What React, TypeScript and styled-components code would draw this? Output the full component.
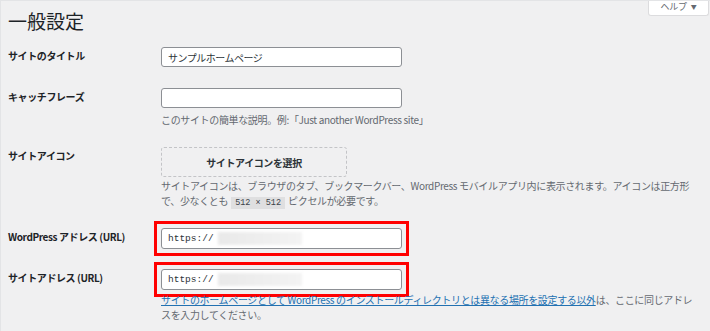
import React from "react";
import styled, { createGlobalStyle } from "styled-components";

const Global = createGlobalStyle`
  html, body { margin: 0; padding: 0; background: #f0f0f1; }
  body { font-family: "Noto Sans CJK JP", "Noto Sans", sans-serif; color: #1d2327; }
`;

const Page = styled.div`
  width: 710px;
  height: 331px;
  box-sizing: border-box;
  overflow: hidden;
  background: #f0f0f1;
  border-top: 1px solid #e3e4e6;
  border-left: 1px solid #e3e4e6;
  padding-left: 7px;
`;

const Header = styled.div`
  display: flex;
  justify-content: space-between;
  align-items: flex-start;
`;

const Heading = styled.h1`
  margin: 0;
  padding-top: 7px;
  font-size: 19px;
  line-height: 25px;
  font-weight: 400;
  color: #1d2327;
`;

const HelpTab = styled.button`
  margin-top: -1px;
  margin-right: 1px;
  width: 61px;
  height: 16px;
  padding: 0 0 1px;
  display: flex;
  align-items: center;
  justify-content: center;
  gap: 4px;
  background: #fff;
  border: 1px solid #dcdcde;
  border-top: none;
  border-radius: 0 0 3px 3px;
  font-family: "Noto Sans CJK JP", sans-serif;
  font-size: 9px;
  line-height: 14px;
  color: #646970;
  letter-spacing: -0.3px;
`;

const Caret = styled.span`
  font-size: 6px;
  color: #646970;
`;

const Table = styled.div`
  display: flex;
  flex-direction: column;
`;

const Row = styled.div<{ $pt: number }>`
  display: grid;
  grid-template-columns: 153px 1fr;
  align-items: start;
  padding-top: ${(p) => p.$pt}px;
`;

const Label = styled.div`
  font-size: 10px;
  letter-spacing: -0.4px;
  font-weight: 700;
  line-height: 18px;
  color: #1d2327;
`;

const Field = styled.div`
  display: flex;
  flex-direction: column;
  align-items: flex-start;
  max-width: 536px;
`;

const Input = styled.div<{ $h: number; $mono?: boolean }>`
  width: 241px;
  height: ${(p) => p.$h}px;
  box-sizing: border-box;
  background: #fff;
  border: 1px solid #8c8f94;
  border-radius: 3px;
  padding: 0 6px;
  display: flex;
  align-items: center;
  font-family: ${(p) =>
    p.$mono ? '"Liberation Mono", "DejaVu Sans Mono", monospace' : '"Noto Sans CJK JP", sans-serif'};
  font-size: ${(p) => (p.$mono ? "9.5px" : "10px")};
  letter-spacing: ${(p) => (p.$mono ? "0" : "-0.5px")};
  color: #2c3338;
  white-space: nowrap;
`;

const Highlight = styled.div`
  outline: 3px solid #ff0000;
  outline-offset: 4px;
`;

const Blur = styled.span`
  display: inline-block;
  width: 84px;
  height: 13px;
  margin-left: 4px;
  background: linear-gradient(90deg, #e9e9e9, #efefef 60%, #f3f3f3);
  filter: blur(1.5px);
`;

const Desc = styled.p<{ $mt: number }>`
  margin: ${(p) => p.$mt}px 0 0;
  font-size: 10px;
  letter-spacing: -0.35px;
  line-height: 15px;
  color: #646970;
`;

const Link = styled.a`
  color: #2271b1;
  text-decoration: underline;
`;

const Code = styled.code`
  font-family: "Liberation Mono", "DejaVu Sans Mono", monospace;
  font-size: 8.5px;
  line-height: 12px;
  letter-spacing: 0;
  background: rgba(0, 0, 0, 0.07);
  color: #3c434a;
  padding: 1px 4px;
  margin: 0 3px;
`;

const IconButton = styled.button`
  width: 186px;
  height: 30px;
  background: transparent;
  border: 1px dashed #c3c4c7;
  border-radius: 3px;
  font-family: "Noto Sans CJK JP", sans-serif;
  font-size: 10px;
  letter-spacing: -0.4px;
  font-weight: 700;
  color: #2c3338;
  padding: 0;
`;

export default function App() {
  return (
    <>
      <Global />
      <Page>
        <Header>
          <Heading>一般設定</Heading>
          <HelpTab>
            ヘルプ<Caret>▼</Caret>
          </HelpTab>
        </Header>
        <Table>
          <Row $pt={14}>
            <Label>サイトのタイトル</Label>
            <Field>
              <Input $h={20}>サンプルホームページ</Input>
            </Field>
          </Row>
          <Row $pt={21}>
            <Label>キャッチフレーズ</Label>
            <Field>
              <Input $h={20} />
              <Desc $mt={4}>このサイトの簡単な説明。例:「Just another WordPress site」</Desc>
            </Field>
          </Row>
          <Row $pt={20}>
            <Label>サイトアイコン</Label>
            <Field>
              <IconButton>サイトアイコンを選択</IconButton>
              <Desc $mt={1}>
                サイトアイコンは、ブラウザのタブ、ブックマークバー、WordPress モバイルアプリ内に表示されます。アイコンは正方形で、少なくとも
                <Code>512 × 512</Code>
                ピクセルが必要です。
              </Desc>
            </Field>
          </Row>
          <Row $pt={19}>
            <Label>WordPress アドレス (URL)</Label>
            <Field>
              <Highlight>
                <Input $h={21} $mono>
                  https://<Blur />
                </Input>
              </Highlight>
            </Field>
          </Row>
          <Row $pt={20}>
            <Label>サイトアドレス (URL)</Label>
            <Field>
              <Highlight>
                <Input $h={21} $mono>
                  https://<Blur />
                </Input>
              </Highlight>
              <Desc $mt={2}>
                <Link href="#">サイトのホームページとして WordPress のインストールディレクトリとは異なる場所を設定する以外</Link>
                は、ここに同じアドレスを入力してください。
              </Desc>
            </Field>
          </Row>
        </Table>
      </Page>
    </>
  );
}
